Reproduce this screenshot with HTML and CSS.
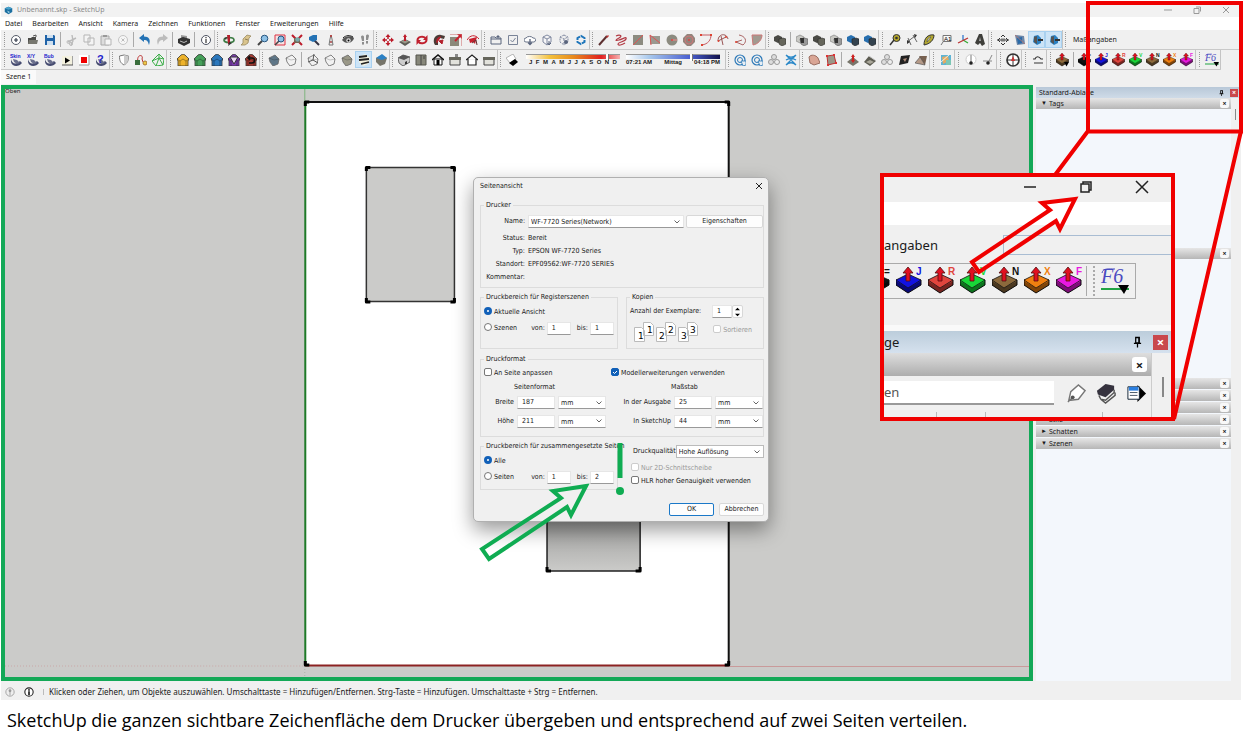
FILE: index.html
```html
<!DOCTYPE html>
<html lang="de">
<head>
    <meta charset="UTF-8">
    <meta name="viewport" content="width=device-width, initial-scale=1.0">
    <title>Unbenannt.skp - SketchUp</title>
    <link rel="stylesheet" href="styles.css">
</head>
<body>
    <!-- Icons -->
    <svg class="sprite" aria-hidden="true">
        <linearGradient id="gShade" x1="0" y1="0" x2="0" y2="1"><stop offset="0" stop-color="#8b8b8a"/><stop offset="1" stop-color="#cbcbc9"/></linearGradient>
        <symbol id="logo" viewBox="0 0 12 12"><path d="M6 1l5 2v5l-5 3-5-3V3z" fill="#1b6fa0"/><path d="M6 1l5 2-5 2-5-2z" fill="#4aa3cc"/><path d="M4 6l4 2-2 1.500z" fill="#9bd0e6"/></symbol>
        <symbol id="new" viewBox="0 0 12 12"><circle cx="6" cy="6" r="4.500" fill="#fff" stroke="#555b68"/><path d="M4 6h4M6 4v4" stroke="#333a4a" stroke-width="1.200"/></symbol>
        <symbol id="open" viewBox="0 0 12 12"><path d="M1 4h3l1-1h4v7H1z" fill="#4b4b48"/><path d="M2 6h9l-1 4H1z" fill="#77776f"/><path d="M6 2l3-1v2" fill="none" stroke="#555"/></symbol>
        <symbol id="save" viewBox="0 0 12 12"><path d="M1 1h9l1 1v9H1z" fill="#1f63a8"/><path d="M3 1h6v3H3zM3 7h6v4H3z" fill="#cfe0f0"/></symbol>
        <symbol id="cut" viewBox="0 0 12 12"><path d="M2 8l8-4M6 1l1 6-2 4" fill="none" stroke="#bbb" stroke-width="1.400"/><circle cx="2.500" cy="8" r="1.500" fill="none" stroke="#bbb"/><circle cx="5" cy="10" r="1.500" fill="none" stroke="#bbb"/></symbol>
        <symbol id="copy" viewBox="0 0 12 12"><path d="M1 1h6v7H1zM5 4h6v7H5z" fill="#f4f4f4" stroke="#b5b5b5"/></symbol>
        <symbol id="paste" viewBox="0 0 12 12"><path d="M1 2h8v9H1z" fill="#ddd" stroke="#aaa"/><path d="M3 1h4v2H3z" fill="#999"/><path d="M5 5h6v6H5z" fill="#f6f6f6" stroke="#b5b5b5"/></symbol>
        <symbol id="del" viewBox="0 0 12 12"><circle cx="6" cy="6" r="4.500" fill="#f6f6f6" stroke="#c4c4c4"/><path d="M4.500 4.500l3 3m0-3l-3 3" stroke="#bbb"/></symbol>
        <symbol id="undo" viewBox="0 0 12 12"><path d="M0 4l5-4v2.500c5 0 7 3 5 8.500-1-4-2-5-5-5V8z" fill="#2573b5"/></symbol>
        <symbol id="redo" viewBox="0 0 12 12"><path d="M12 4L7 0v2.500C2 2.500 0 5.500 2 11c1-4 2-5 5-5V8z" fill="#bcbcbc"/></symbol>
        <symbol id="print" viewBox="0 0 12 12"><path d="M3 1l6 1v3H3z" fill="#999"/><path d="M0 5l5-2 7 2v4l-6 3-6-3z" fill="#333"/><path d="M2 7l4 1.500L9 7" stroke="#bbb" fill="none"/></symbol>
        <symbol id="info" viewBox="0 0 12 12"><circle cx="6" cy="6" r="4.500" fill="#fff" stroke="#4d5260"/><path d="M6 3v1.300M6 5v4" stroke="#333" stroke-width="1.200"/></symbol>
        <symbol id="orbit" viewBox="0 0 12 12"><ellipse cx="6" cy="6" rx="5" ry="2.500" fill="none" stroke="#3d7d45" stroke-width="1.700"/><path d="M4 1h3v9H5z" fill="#b3202c"/><path d="M5 12l4-3-3-1zM1 4l3-1-1 3z" fill="#333"/></symbol>
        <symbol id="pan" viewBox="0 0 12 12"><path d="M1 11l2-2 0-4 4-4 4 1-2 2-1 5-3 2z" fill="#d9c48d" stroke="#9a8a62" stroke-width=".8"/><path d="M5 5l3 1" stroke="#8d7c55"/></symbol>
        <symbol id="zoom" viewBox="0 0 12 12"><path d="M5 7l-4 4" stroke="#444" stroke-width="2"/><circle cx="7.500" cy="4.500" r="3.300" fill="#8ec1e6" stroke="#27557e"/></symbol>
        <symbol id="zoomwin" viewBox="0 0 12 12"><path d="M1 1h10v10H1z" fill="#f5e3e3" stroke="#d34"/><path d="M5 7l-4 4" stroke="#444" stroke-width="1.600"/><circle cx="7" cy="5" r="3" fill="#8ec1e6" stroke="#27557e"/></symbol>
        <symbol id="extents" viewBox="0 0 12 12"><path d="M1 1l10 10M11 1L1 11" stroke="#bd1c2b" stroke-width="2"/><path d="M3 4h6v5H3z" fill="#765"/><circle cx="6.500" cy="5.500" r="2.300" fill="#7aa"/></symbol>
        <symbol id="zoomprev" viewBox="0 0 12 12"><path d="M6 6l5 5" stroke="#334" stroke-width="2"/><path d="M1 3l4-2h4v5L5 8 1 6z" fill="#2573b5"/></symbol>
        <symbol id="camera" viewBox="0 0 12 12"><path d="M6 1l1 4 1 6H4l1-6z" fill="#eee" stroke="#777"/><circle cx="6" cy="2" r="1" fill="#b33"/><circle cx="6" cy="8" r="1" fill="#a44"/></symbol>
        <symbol id="eye" viewBox="0 0 12 12"><path d="M0 6c2-4 9-5 12-2-1 5-8 7-12 2z" fill="#555"/><circle cx="6.500" cy="6.500" r="2.200" fill="#ddd"/><path d="M1 4c3-3 7-3 10-1" stroke="#222" fill="none"/><circle cx="6.500" cy="6.500" r="1"/></symbol>
        <symbol id="steps" viewBox="0 0 12 12"><path d="M2 3c0-2 3-2 3 0v4H3zM7 2c0-2 3-2 3 0l-1 4H7zM3 8h2v2c0 1-2 1-2 0zM7 7h2v2c0 1-2 1-2 0z" fill="#8e8e8e"/></symbol>
        <symbol id="move" viewBox="0 0 12 12"><path d="M6 0l2.500 3h-5zM6 12l2.500-3h-5zM0 6l3-2.500v5zM12 6L9 3.500v5z" fill="#bd1c2b"/><path d="M6 2v8M2 6h8" stroke="#bd1c2b" stroke-width="1.500" stroke-dasharray="3 2"/></symbol>
        <symbol id="pushpull" viewBox="0 0 12 12"><path d="M0 8l6-3 6 3-6 4z" fill="#5d5c55"/><path d="M2 7.500l4-2 4 2-4 2z" fill="#9a9788"/><path d="M6 0l2 3H7v4H5V3H4z" fill="#bd1c2b"/></symbol>
        <symbol id="rotate" viewBox="0 0 12 12"><path d="M1.500 6a4.500 3.500 0 0 1 8-2M10.500 6a4.500 3.500 0 0 1-8 2" stroke="#c0202e" stroke-width="2" fill="none"/><path d="M11.500 1v5H7zM.5 11V6H5z" fill="#c0202e"/></symbol>
        <symbol id="follow" viewBox="0 0 12 12"><path d="M1 9C0 4 3 0 8 1l4 1-1 3-4-1-2 3v4H2z" fill="#4a3b36"/><path d="M4 9C3 5 5 3 8 3M6 7l4-1-1 4z" stroke="#b3202c" fill="#b3202c"/></symbol>
        <symbol id="scale" viewBox="0 0 12 12"><path d="M0 3h9v9H0z" fill="#8b897a"/><path d="M7 0h5v5z" fill="#c8202e"/><path d="M5 7l5-5" stroke="#c8202e" stroke-width="2"/><path d="M0 0h12v12" fill="none" stroke="#c66"/></symbol>
        <symbol id="offset" viewBox="0 0 12 12"><path d="M0 6c3-5 8-6 12-1" fill="none" stroke="#c8202e"/><path d="M2 5l8-2-2 7-2-2-3 1z" fill="#c8202e"/><path d="M5 9l4-3 1 5" stroke="#633" fill="none"/></symbol>
        <symbol id="addfolder" viewBox="0 0 12 12"><path d="M1 3h4l1 1h5v6H1zM1 5h10M8 1v3M6.500 2.500h3" fill="none" stroke="#59647c"/></symbol>
        <symbol id="check" viewBox="0 0 12 12"><path d="M1.500 1.500h9v9h-9zM3.500 6l2 2 3-4" fill="none" stroke="#7a8498"/></symbol>
        <symbol id="cloud" viewBox="0 0 12 12"><path d="M2 8a2 2 0 0 1 0-4 4 3 0 0 1 7 0 2 2 0 0 1 1 4z" fill="#fff" stroke="#6a7488"/><path d="M6 5v5M4 8.500l2 2 2-2" stroke="#59647c" fill="none" stroke-width="1.300"/></symbol>
        <symbol id="cube" viewBox="0 0 12 12"><path d="M6 1l4 2v5l-4 3-4-3V3zM2 3l4 2 4-2M6 5v6" fill="#f6f6f8" stroke="#8089a0"/><path d="M8 7v3M6.500 9L8 11l2-2" stroke="#59647c" fill="none"/></symbol>
        <symbol id="gearcube" viewBox="0 0 12 12"><path d="M6 1l4 2v5l-4 3-4-3V3zM2 3l4 2 4-2M6 5v6" fill="none" stroke="#8089a0" stroke-dasharray="2 1"/><circle cx="8" cy="8" r="2" fill="#59647c"/></symbol>
        <symbol id="exthub" viewBox="0 0 12 12"><path d="M6 2l3.500 2v4L6 10 2.500 8V4z" fill="none" stroke="#1d75ba" stroke-width="2" stroke-dasharray="5 1"/></symbol>
        <symbol id="pencil" viewBox="0 0 12 12"><path d="M1 11L9 2" stroke="#5d3030" stroke-width="2"/><path d="M8 3l2-2 1 1-2 2z" fill="#b33"/></symbol>
        <symbol id="freehand" viewBox="0 0 12 12"><path d="M1 2c4-2 7 0 3 2S0 7 4 6s8-4 7-1-8 3-8 5 4 1 7-1" fill="none" stroke="#b23a44" stroke-width="1.200"/></symbol>
        <symbol id="rect" viewBox="0 0 12 12"><path d="M1 1h10v10H1z" fill="#8c8b80"/><path d="M1 11L11 1" stroke="#d55"/></symbol>
        <symbol id="rrect" viewBox="0 0 12 12"><path d="M1 2h10v8H1z" fill="#9a9990"/><path d="M1 1l1 10M1 1l10 8" stroke="#d55" fill="none"/></symbol>
        <symbol id="circle" viewBox="0 0 12 12"><circle cx="6" cy="6" r="5.500" fill="#8c8b80"/><path d="M6 6h5" stroke="#e88"/><circle cx="6" cy="6" r="1" fill="#d44"/></symbol>
        <symbol id="poly" viewBox="0 0 12 12"><path d="M4 0h5l3 4v4l-4 4H4L0 8V4z" fill="#94847c"/><circle cx="6" cy="6" r="4" fill="none" stroke="#c77"/><circle cx="6" cy="6" r="1" fill="#d44"/></symbol>
        <symbol id="arc1" viewBox="0 0 12 12"><path d="M1 1h10M1 1v1M11 1c0 5-3 9-9 10" fill="none" stroke="#c65a62"/><path d="M0 0h2v2H0zM10 0h2v2h-2zM1 10h2v2H1z" fill="#d43"/></symbol>
        <symbol id="arc2" viewBox="0 0 12 12"><path d="M1 7c0-8 9-8 10-2M1 7l8-4M4 2l2 9" fill="none" stroke="#955"/><circle cx="1.500" cy="7" r="1" fill="#d43"/><circle cx="9" cy="3" r="1" fill="#d43"/></symbol>
        <symbol id="arc3" viewBox="0 0 12 12"><path d="M5 1c6 1 9 6 4 10l-7-3 6-2" fill="none" stroke="#a66"/><circle cx="2" cy="8" r="1" fill="#d43"/></symbol>
        <symbol id="pie" viewBox="0 0 12 12"><path d="M1 1h10c0 5-4 9-9 10z" fill="#a19a90" stroke="#c77"/></symbol>
        <symbol id="solid" viewBox="0 0 12 12"><path d="M0 3l4-2 4 2v5l-4 1-4-2z" fill="#4a4a45"/><path d="M5 5l4-1 3 1v5l-4 2-3-2z" fill="#66665c" stroke="#2c2c2a" stroke-width=".6"/></symbol>
        <symbol id="solidw" viewBox="0 0 12 12"><path d="M0 3l4-2 4 2v5l-4 1-4-2z" fill="#c9c9c5" stroke="#777" stroke-width=".6"/><path d="M4 5l4-1 4 1v5l-4 2-3-2z" fill="#999" stroke="#555" stroke-width=".6"/><path d="M4 4h4v5H5z" fill="#333"/></symbol>
        <symbol id="solidb" viewBox="0 0 12 12"><path d="M0 3l4-2 4 2v5l-4 1-4-2z" fill="#276faf"/><path d="M5 5l4-1 3 1v5l-4 2-3-2z" fill="#34434f" stroke="#222" stroke-width=".6"/></symbol>
        <symbol id="tape" viewBox="0 0 12 12"><circle cx="7.500" cy="4" r="3.500" fill="#b5a72c" stroke="#333"/><circle cx="7.500" cy="4" r="1.300" fill="#333"/><path d="M5 6l-4 5" stroke="#333" stroke-width="1.500"/></symbol>
        <symbol id="dim" viewBox="0 0 12 12"><path d="M1 8l8-6M2 4l3 7M7 1l4 7" stroke="#666" fill="none"/><path d="M1 6l3 2-3 2zM8 0l3 1-2 3z" fill="#333"/></symbol>
        <symbol id="protr" viewBox="0 0 12 12"><path d="M1 11C1 4 5 0 11 1c0 5-4 9-10 10z" fill="#b3a831" stroke="#333"/><path d="M4 8c0-3 2-5 4-5z" fill="#eee" stroke="#444" stroke-width=".6"/></symbol>
        <symbol id="text" viewBox="0 0 12 12"><path d="M3 1.500h8v6H3zM1 11l2-3" fill="#fafafa" stroke="#777"/></symbol>
        <symbol id="axes" viewBox="0 0 12 12"><path d="M6 6V1" stroke="#37c" stroke-width="1.300"/><path d="M6 6l5 3" stroke="#3a3" stroke-width="1.300"/><path d="M11 4L1 9" stroke="#b33" stroke-width="1.300"/></symbol>
        <symbol id="text3d" viewBox="0 0 12 12"><path d="M1 9l4-9h3l3 10-3 2-2-3-2 2z" fill="#3e3e3a"/><path d="M6 3l1 4H5z" fill="#aaa"/></symbol>
        <symbol id="section" viewBox="0 0 12 12"><path d="M0 6h12M3 4L1 6l2 2M9 4l2 2-2 2M4 3l2-2 2 2M4 9l2 2 2-2" fill="none" stroke="#333"/><path d="M4 4.500h4v3H4z" fill="#777"/></symbol>
        <symbol id="sectplane" viewBox="0 0 12 12"><path d="M1 1l9 1 1 8-8 1z" fill="#6b86a8"/><path d="M3 4l5-1v6l-4 1z" fill="#2a6aa8"/><path d="M1 1l10 9" stroke="#a77"/></symbol>
        <symbol id="sectcut" viewBox="0 0 12 12"><path d="M3 2l4-1 3 3v5l-4 2-4-3z" fill="#2a7fc0"/><path d="M3 3l3-1v8l-3-2z" fill="#555"/><path d="M7 5h5v2H7z" fill="#333"/></symbol>
        <symbol id="ink" viewBox="0 0 12 12"><path d="M1 5c1 5 5 6 9 2l2 2c-3 4-10 4-11-1z" fill="#454b70"/><path d="M3 5l4 1 3 3-3 1-3-2z" fill="#6a6f8c"/></symbol>
        <symbol id="play" viewBox="0 0 12 12"><path d="M1 2h10v9H1z" fill="#f3f1df"/><path d="M1 11h11V2" stroke="#555" fill="none"/><path d="M4 3.500l5 3-5 3z"/></symbol>
        <symbol id="stop" viewBox="0 0 12 12"><path d="M1 1h10v10H1z" fill="#fff"/><path d="M1 11h10V1" stroke="#999" fill="none"/><path d="M3 3h6v6H3z" fill="#f00000"/></symbol>
        <symbol id="shield" viewBox="0 0 12 12"><path d="M1.500 2L6 1l4.500 1c0 5-1 7-4.500 9-3.500-2-4.500-4-4.500-9z" fill="#fff" stroke="#777"/><path d="M6 1v10c3-2 4.500-4 4.500-9z" fill="#ccc"/></symbol>
        <symbol id="route" viewBox="0 0 12 12"><path d="M3 8C1 0 9 0 7 5l1 3" fill="none" stroke="#b33"/><path d="M0 6h5v5H0z" fill="#3a6e3d"/><circle cx="10" cy="9" r="2" fill="#eec945" stroke="#a73"/></symbol>
        <symbol id="mesh" viewBox="0 0 12 12"><path d="M7 0l5 5-1 6-7 1-4-5zM0 7l7-3 4 7M7 0v4l-3 8M7 4l5 1" fill="none" stroke="#3cae49"/></symbol>
        <symbol id="shirt" viewBox="0 0 12 12"><path d="M4 1l2-1 2 1 4 4-1 2v5H1V7L0 5z" fill="currentColor" stroke="#333" stroke-width=".8"/><path d="M3 7v5M9 7v5M0 5l3 2 3-2 3 2 3-2" stroke="#0006" fill="none" stroke-width=".8"/></symbol>
        <symbol id="block" viewBox="0 0 12 12"><path d="M1 4l6-3 4 4-1 5-5 2-3-4z" fill="currentColor" stroke="#666" stroke-width=".8"/><path d="M1 4l5 2 5-1" stroke="#0003" fill="none"/></symbol>
        <symbol id="stripes" viewBox="0 0 12 12"><path d="M1 3l6-3 5 4-2 6-5 2-4-4z" fill="#f5f3e0"/><path d="M1 3l8-1M1 6l10-1M3 10l8-2" stroke="#222" stroke-width="1.800"/></symbol>
        <symbol id="bluetop" viewBox="0 0 12 12"><path d="M1 4l6-3 5 3-2 6-5 2-4-4z" fill="#77756a"/><path d="M1 4l6-4 5 4-5 2z" fill="#2a80c5"/></symbol>
        <symbol id="iso" viewBox="0 0 12 12"><path d="M0 4l5-3 7 2v5l-7 4-4-3z" fill="#ccc" stroke="#444" stroke-width=".8"/><path d="M0 4l6 2 6-3-7-2z" fill="#555"/><path d="M7 8l2-1v3H7z" fill="#333"/></symbol>
        <symbol id="top" viewBox="0 0 12 12"><path d="M1 1h10v10H1z" fill="#87877a" stroke="#55554c"/><path d="M6 1v10M9 2v3" stroke="#444"/></symbol>
        <symbol id="front" viewBox="0 0 12 12"><path d="M0 6l6-5 6 5" fill="none" stroke="#111" stroke-width="1.500"/><path d="M2 5h8v6H2z" fill="#fff" stroke="#111"/><path d="M4.500 6h3v5h-3z"/></symbol>
        <symbol id="side" viewBox="0 0 12 12"><path d="M1 5h10v6H1z" fill="#e2e2dc" stroke="#444"/><path d="M0 3h12v3H0z" fill="#66665c"/></symbol>
        <symbol id="back" viewBox="0 0 12 12"><path d="M0 6l6-5 6 5M2 5v6h8V5" fill="#fff" stroke="#222" stroke-width="1.200"/></symbol>
        <symbol id="shadow" viewBox="0 0 12 12"><path d="M0 4l7-4 3 5-6 4z" fill="#fff" stroke="#888" stroke-width=".6"/><path d="M3 9l6-4 3 3-5 4z"/></symbol>
        <symbol id="swirl" viewBox="0 0 12 12"><circle cx="6" cy="6" r="5" fill="none" stroke="#2b78b8" stroke-width="1.200"/><circle cx="6" cy="6" r="2.500" fill="none" stroke="#2b78b8"/><path d="M7 7h5v4l-3 1z" fill="#e8eef4" stroke="#2b78b8" stroke-width=".8"/></symbol>
        <symbol id="blobs" viewBox="0 0 12 12"><circle cx="6" cy="3" r="2.500" fill="#ddd" stroke="#999"/><circle cx="3" cy="8" r="2.500" fill="#ddd" stroke="#999"/><circle cx="9" cy="8" r="2.500" fill="#eee" stroke="#999"/></symbol>
        <symbol id="net" viewBox="0 0 12 12"><path d="M1 1c3 3 7 3 10 0M1 6c3-2 7-2 10 0M1 11c3-3 7-3 10 0M1 1l10 10M11 1L1 11" fill="none" stroke="#2b88c8" stroke-width="1.300"/></symbol>
        <symbol id="terrain" viewBox="0 0 12 12"><path d="M0 8l5-6 7 5-6 5z" fill="#5d5c52"/><path d="M2 8l4-2 4 2-4 2z" fill="#aaa79a"/><path d="M5 2l6 4" stroke="#ccc"/></symbol>
        <symbol id="soft" viewBox="0 0 12 12"><path d="M1 3c2-3 7-2 9 1l2 5-6 2-4-2z" fill="#d9a595" stroke="#9a6c60"/></symbol>
        <symbol id="frame" viewBox="0 0 12 12"><path d="M2 2l7-1 2 8-8 2z" fill="#9b9788" stroke="#b33"/><path d="M1 1h2v2H1zM8 0h2v2H8zM10 8h2v2h-2zM2 10h2v2H2z" fill="#d33"/></symbol>
        <symbol id="redarrow" viewBox="0 0 12 12"><path d="M0 8l6-5 6 5-6 4z" fill="#77756a"/><path d="M6 0l2 3H7v3h1l-2 3-2-3h1V3H4z" fill="#c22"/></symbol>
        <symbol id="dark" viewBox="0 0 12 12"><path d="M3 2l9-1-2 8-9 2z" fill="#222"/><path d="M5 5l4-1-2 4z" fill="#a87"/></symbol>
        <symbol id="flip" viewBox="0 0 12 12"><path d="M4 2h8l-2 9z" fill="#77604f"/><path d="M0 9l5-6 5 8z" fill="#b59a88" stroke="#444" stroke-width=".6"/></symbol>
        <symbol id="geo" viewBox="0 0 12 12"><path d="M1 1h10v10H1z" fill="#5fb4d4"/><path d="M2 3l6-1 1 5-6 3z" fill="#e2aa62"/><path d="M6 6h5v5H6z" fill="#7cc7b4"/><path d="M1 8l8-7" stroke="#fff" stroke-width=".8"/></symbol>
        <symbol id="point" viewBox="0 0 12 12"><circle cx="6" cy="5.500" r="5" fill="#fff" stroke="#ccc"/><path d="M6 1v8" stroke="#777"/><circle cx="6" cy="9" r="1.800" fill="#222"/></symbol>
        <symbol id="point2" viewBox="0 0 12 12"><path d="M10 1L6 9M1 7h9" stroke="#888" fill="none"/><circle cx="6" cy="9" r="1.800" fill="#222"/></symbol>
        <symbol id="compass" viewBox="0 0 14 14"><circle cx="7" cy="7" r="6" fill="#fff" stroke="#333" stroke-width="1.700"/><path d="M7 1v12M1 7h12" stroke="#333"/><path d="M7 3l2 5H5z" fill="#c33"/></symbol>
        <symbol id="wave" viewBox="0 0 12 12"><path d="M2 9h9M1 5h2c1-3 4-3 6 0h2" fill="none" stroke="#333" stroke-width="1.200"/></symbol>
        <symbol id="slab" viewBox="0 0 28 28">
            <path d="M0 13v5l12 8 13-8v-5z" fill="currentColor" stroke="#111"/>
            <path d="M0 18l12 8 13-8v-4l-13 7-12-7z" fill="#0007"/>
            <path d="M0 13l12-6 13 6-13 8z" fill="currentColor" stroke="#111" stroke-width=".8"/>
            <path d="M12 0l5 6h-3v8h-4V6H7z" fill="#e01020" stroke="#501010" stroke-width=".8"/>
        </symbol>
        <symbol id="pin" viewBox="0 0 10 12"><path d="M3 1h4v6H3zM6.500 1v6M1 7.500h8M5 8v4" fill="none" stroke="#000" stroke-width="1.400"/></symbol>
    </svg>

    <main class="slide">
        <div class="app">
            <header class="titlebar">
                <svg class="logo"><use href="#logo"/></svg>
                <span class="title">Unbenannt.skp - SketchUp</span>
                <span class="winbuttons">
                    <button title="Minimieren"><svg viewBox="0 0 10 10"><path d="M1 5h8"/></svg></button>
                    <button title="Verkleinern"><svg viewBox="0 0 10 10"><path d="M2 3.500h5v5H2zM4 2h4.500v4.500"/></svg></button>
                    <button title="Schließen"><svg viewBox="0 0 10 10"><path d="M2 2l6 6M8 2L2 8"/></svg></button>
                </span>
            </header>
            <nav class="menubar">
                <a href="#">Datei</a><a href="#">Bearbeiten</a><a href="#">Ansicht</a><a href="#">Kamera</a><a href="#">Zeichnen</a><a href="#">Funktionen</a><a href="#">Fenster</a><a href="#">Erweiterungen</a><a href="#">Hilfe</a>
            </nav>

            <div class="toolrow">
                <div class="toolbar">
                    <button title="Neu"><svg><use href="#new"/></svg></button>
                    <button title="Öffnen"><svg><use href="#open"/></svg></button>
                    <button title="Speichern"><svg><use href="#save"/></svg></button>
                    <i class="sep"></i>
                    <button title="Ausschneiden"><svg><use href="#cut"/></svg></button>
                    <button title="Kopieren"><svg><use href="#copy"/></svg></button>
                    <button title="Einfügen"><svg><use href="#paste"/></svg></button>
                    <button title="Löschen"><svg><use href="#del"/></svg></button>
                    <i class="sep"></i>
                    <button title="Rückgängig"><svg><use href="#undo"/></svg></button>
                    <button title="Wiederholen"><svg><use href="#redo"/></svg></button>
                    <i class="sep"></i>
                    <button title="Drucken"><svg><use href="#print"/></svg></button>
                    <i class="sep"></i>
                    <button title="Modellinformationen"><svg><use href="#info"/></svg></button>
                </div>
                <div class="toolbar">
                    <button title="Rotieren"><svg><use href="#orbit"/></svg></button>
                    <button title="Schwenken"><svg><use href="#pan"/></svg></button>
                    <button title="Zoom"><svg><use href="#zoom"/></svg></button>
                    <button title="Zoomfenster"><svg><use href="#zoomwin"/></svg></button>
                    <button title="Alles zoomen"><svg><use href="#extents"/></svg></button>
                    <button title="Vorherige"><svg><use href="#zoomprev"/></svg></button>
                    <button title="Kamera positionieren"><svg><use href="#camera"/></svg></button>
                    <button title="Umsehen"><svg><use href="#eye"/></svg></button>
                    <button title="Gehen"><svg><use href="#steps"/></svg></button>
                </div>
                <div class="toolbar">
                    <button title="Verschieben"><svg><use href="#move"/></svg></button>
                    <button title="Drücken/Ziehen"><svg><use href="#pushpull"/></svg></button>
                    <button title="Drehen"><svg><use href="#rotate"/></svg></button>
                    <button title="Folge mir"><svg><use href="#follow"/></svg></button>
                    <button title="Skalieren"><svg><use href="#scale"/></svg></button>
                    <button title="Versatz"><svg><use href="#offset"/></svg></button>
                </div>
                <div class="toolbar">
                    <button title="Ordner"><svg><use href="#addfolder"/></svg></button>
                    <button title="Prüfen"><svg><use href="#check"/></svg></button>
                    <button title="Hochladen"><svg><use href="#cloud"/></svg></button>
                    <button title="3D Warehouse"><svg><use href="#cube"/></svg></button>
                    <button title="Komponente freigeben"><svg><use href="#gearcube"/></svg></button>
                    <button title="Extension Warehouse"><svg><use href="#exthub"/></svg></button>
                </div>
                <div class="toolbar">
                    <button title="Linie"><svg><use href="#pencil"/></svg></button>
                    <button title="Freihand"><svg><use href="#freehand"/></svg></button>
                    <button title="Rechteck"><svg><use href="#rect"/></svg></button>
                    <button title="Gedrehtes Rechteck"><svg><use href="#rrect"/></svg></button>
                    <button title="Kreis"><svg><use href="#circle"/></svg></button>
                    <button title="Polygon"><svg><use href="#poly"/></svg></button>
                    <button title="Bogen"><svg><use href="#arc1"/></svg></button>
                    <button title="2-Punkt-Bogen"><svg><use href="#arc2"/></svg></button>
                    <button title="3-Punkt-Bogen"><svg><use href="#arc3"/></svg></button>
                    <button title="Kreissektor"><svg><use href="#pie"/></svg></button>
                </div>
                <div class="toolbar">
                    <button title="Außenschale"><svg><use href="#solid"/></svg></button>
                    <i class="sep"></i>
                    <button title="Schnittmenge"><svg><use href="#solidw"/></svg></button>
                    <button title="Vereinigen"><svg><use href="#solid"/></svg></button>
                    <button title="Subtrahieren"><svg><use href="#solidw"/></svg></button>
                    <button title="Zuschneiden"><svg><use href="#solidb"/></svg></button>
                    <button title="Teilen"><svg><use href="#solidb"/></svg></button>
                </div>
                <div class="toolbar wide">
                    <button title="Maßband"><svg><use href="#tape"/></svg></button>
                    <button title="Abmessungen"><svg><use href="#dim"/></svg></button>
                    <button title="Winkelmesser"><svg><use href="#protr"/></svg></button>
                    <button title="Text"><svg><use href="#text"/><text class="label" x="4" y="7">A1</text></svg></button>
                    <button title="Achsen"><svg><use href="#axes"/></svg></button>
                    <button title="3D-Text"><svg><use href="#text3d"/></svg></button>
                </div>
                <div class="toolbar">
                    <button title="Schnittebene"><svg><use href="#section"/></svg></button>
                    <button title="Schnittebenen anzeigen"><svg><use href="#sectplane"/></svg></button>
                    <button class="on" title="Schnitte anzeigen"><svg><use href="#sectcut"/></svg></button>
                    <button class="on" title="Schnittfüllung"><svg><use href="#sectcut"/></svg></button>
                </div>
                <div class="toolbar last"><span class="measure">Maßangaben</span></div>
            </div>

            <div class="toolrow short">
                <div class="toolbar">
                    <button title="Skin"><svg><use href="#ink"/><text class="tag" x="0" y="4">Skin</text></svg></button>
                    <button title="X/Y"><svg><use href="#ink"/><text class="tag" x="0" y="4">X/Y</text></svg></button>
                    <button title="Bub"><svg><use href="#ink"/><text class="tag" x="0" y="4">Bub</text></svg></button>
                    <button title="Start"><svg><use href="#play"/></svg></button>
                    <button title="Stopp"><svg><use href="#stop"/></svg></button>
                    <button title="Hilfe"><svg><use href="#ink"/><text class="tag big" x="2" y="9">?</text></svg></button>
                </div>
                <div class="toolbar">
                    <button title="Schild"><svg><use href="#shield"/></svg></button>
                    <button title="Pfad"><svg><use href="#route"/></svg></button>
                    <button title="Netz"><svg><use href="#mesh"/></svg></button>
                </div>
                <div class="toolbar wide">
                    <button title="Gelb" class="c-yellow"><svg><use href="#shirt"/></svg></button>
                    <button title="Grün" class="c-leaf"><svg><use href="#shirt"/></svg></button>
                    <button title="Blau" class="c-sky"><svg><use href="#shirt"/></svg></button>
                    <button title="Violett" class="c-violet"><svg><use href="#shirt"/><path d="M2 3h8l-4 7z" fill="#e9d6f5" stroke="#333"/></svg></button>
                    <button title="Zurück" class="c-brick"><svg><use href="#shirt"/><path d="M3 4h4a2 2 0 0 1 0 5H4M5 2L3 4l2 2" fill="none" stroke="#111" stroke-width="1.500"/></svg></button>
                </div>
                <div class="toolbar">
                    <button title="Röntgen" class="c-slate"><svg><use href="#block"/></svg></button>
                    <button title="Hintere Kanten" class="c-pale"><svg><use href="#block"/></svg></button>
                    <i class="sep"></i>
                    <button title="Drahtmodell" class="c-pale"><svg><use href="#block"/><path d="M1 8l5-2 5 3M7 0L6 6" fill="none" stroke="#555"/></svg></button>
                    <button title="Verdeckte Linie" class="c-pale"><svg><use href="#block"/></svg></button>
                    <button title="Schattiert" class="c-clay"><svg><use href="#block"/></svg></button>
                    <button class="on" title="Texturen"><svg><use href="#stripes"/></svg></button>
                    <button title="Monochrom"><svg><use href="#bluetop"/></svg></button>
                </div>
                <div class="toolbar">
                    <button title="Iso"><svg><use href="#iso"/></svg></button>
                    <button title="Oben"><svg><use href="#top"/></svg></button>
                    <button title="Vorne"><svg><use href="#front"/></svg></button>
                    <button title="Rechts"><svg><use href="#side"/><path d="M6 0h3v3H6z" fill="#888"/></svg></button>
                    <button title="Hinten"><svg><use href="#back"/></svg></button>
                    <button title="Links"><svg><use href="#side"/></svg></button>
                </div>
                <div class="toolbar shadows">
                    <button title="Schatten"><svg><use href="#shadow"/></svg></button>
                    <div class="slider month">
                        <input type="range" aria-label="Monat" min="0" max="100" value="88">
                        <div class="ticks"><span>J</span><span>F</span><span>M</span><span>A</span><span>M</span><span>J</span><span>J</span><span>A</span><span>S</span><span>O</span><span>N</span><span>D</span></div>
                    </div>
                    <div class="slider time">
                        <input type="range" aria-label="Uhrzeit" min="0" max="100" value="70">
                        <div class="ticks"><span>07:21 AM</span><span>Mittag</span><span>04:18 PM</span></div>
                    </div>
                </div>
                <div class="toolbar">
                    <button title="Spirale"><svg><use href="#swirl"/></svg></button>
                    <button title="Spirale 2"><svg><use href="#swirl"/></svg></button>
                    <button title="Blasen"><svg><use href="#blobs"/></svg></button>
                    <button title="Gitter"><svg><use href="#net"/></svg></button>
                </div>
                <div class="toolbar">
                    <button title="Aus Konturen"><svg><use href="#soft"/></svg></button>
                    <button title="Von Grund auf"><svg><use href="#frame"/></svg></button>
                    <i class="sep"></i>
                    <button title="Formen"><svg><use href="#redarrow"/></svg></button>
                    <button title="Stempel"><svg><use href="#terrain"/></svg></button>
                    <button title="Drapieren"><svg><use href="#blobs"/></svg></button>
                    <button title="Detail"><svg><use href="#dark"/></svg></button>
                    <button title="Kante drehen"><svg><use href="#flip"/></svg></button>
                </div>
                <div class="toolbar wide"><button title="Standort"><svg><use href="#geo"/></svg></button></div>
                <div class="toolbar wide">
                    <button title="Punkt"><svg><use href="#point"/></svg></button>
                    <button title="Lot"><svg><use href="#point2"/></svg></button>
                </div>
                <div class="toolbar wide push"><button title="Kompass"><svg><use href="#compass"/></svg></button></div>
                <div class="toolbar wide"><button title="Welle"><svg><use href="#wave"/></svg></button></div>
                <div class="toolbar wide push">
                    <button title="Push Pull" class="c-brown"><svg viewBox="0 0 28 28"><use href="#slab"/><path d="M16 18h10l-5 9z"/></svg></button>
                    <i class="sep"></i>
                    <button title="=" class="c-black"><svg viewBox="0 0 28 28"><use href="#slab"/><text x="20" y="8">=</text></svg></button>
                    <button title="J" class="c-blue"><svg viewBox="0 0 28 28"><use href="#slab"/><text x="20" y="8">J</text></svg></button>
                    <button title="R" class="c-red"><svg viewBox="0 0 28 28"><use href="#slab"/><text x="20" y="8">R</text></svg></button>
                    <button title="V" class="c-green"><svg viewBox="0 0 28 28"><use href="#slab"/><text x="20" y="8">V</text></svg></button>
                    <button title="N" class="c-brown"><svg viewBox="0 0 28 28"><use href="#slab"/><text x="20" y="8">N</text></svg></button>
                    <button title="X" class="c-orange"><svg viewBox="0 0 28 28"><use href="#slab"/><text x="20" y="8">X</text></svg></button>
                    <button title="F" class="c-pink"><svg viewBox="0 0 28 28"><use href="#slab"/><text x="20" y="8">F</text></svg></button>
                </div>
                <div class="toolbar wide push"><button title="F6"><svg viewBox="0 0 28 28"><text class="script" x="0" y="16">F6</text><path d="M1 6c1-5 6-4 13-4" fill="none" stroke="#4a4ac0"/><path d="M0 22h28" stroke="#22a344" stroke-width="2"/><path d="M17 18h11l-5 9z"/></svg></button></div>
            </div>

            <div class="scenes"><button>Szene 1</button></div>

            <div class="workspace">
                <section class="viewport">
                    <svg class="drawing" viewBox="6 89 1023 588" preserveAspectRatio="none">
                        <path d="M6 666h300" stroke="#c9a8a8" stroke-dasharray="1 2"/>
                        <path d="M729 666.500h300" stroke="#c99a9a"/>
                        <path d="M305.500 89v14" stroke="#7fb57f"/>
                        <path d="M305.500 666v11" stroke="#a9b5a9" stroke-dasharray="1 2"/>
                        <path d="M306 102h423v563H306z" fill="#fff"/>
                        <path d="M306 102h423v563" fill="none" stroke="#111" stroke-width="2"/>
                        <path d="M306 102v563" stroke="#1e7a28" stroke-width="2"/>
                        <path d="M306 665.500h423" stroke="#8c2222" stroke-width="2"/>
                        <path d="M367 167.500h88v134h-88z" fill="#cbcbc9" stroke="#333" stroke-width="1.500"/>
                        <path d="M547.500 500h93v71h-93z" fill="url(#gShade)" stroke="#222" stroke-width="1.500"/>
                        <path d="M367 171v-3.500h4M451 167.500h4v4M455 298v4h-4M371 302h-4v-4M547.500 567v4h4M636 571h4.500v-4M306 106v-4h4M725 102h4v4M306 661v4h4M725 665h4v-4" fill="none" stroke="#000" stroke-width="3" stroke-linejoin="round"/>
                    </svg>
                    <span class="viewname">Oben</span>
                </section>
                <aside class="tray">
                    <div class="trayhead"><span>Standard-Ablage</span><svg class="pin"><use href="#pin"/></svg><button class="redclose" title="Schließen">×</button></div>
                    <div class="traybody">
                        <div class="panels">
                            <div class="panel"><b>▼</b><span>Tags</span><button title="Schließen">×</button></div>
                            <div class="panelbody"></div>
                            <div class="panel"><span></span><button title="Schließen">×</button></div>
                            <div class="panelbody second"></div>
                            <div class="panel"><span></span><button title="Schließen">×</button></div>
                            <div class="panel"><span></span><button title="Schließen">×</button></div>
                            <div class="panel"><span></span><button title="Schließen">×</button></div>
                            <div class="panel"><b>►</b><span>Stile</span><button title="Schließen">×</button></div>
                            <div class="panel"><b>►</b><span>Schatten</span><button title="Schließen">×</button></div>
                            <div class="panel"><b>▼</b><span>Szenen</span><button title="Schließen">×</button></div>
                        </div>
                        <div class="scroll"><i></i></div>
                    </div>
                </aside>
            </div>

            <footer class="status">
                <svg viewBox="0 0 12 12"><circle cx="6" cy="6" r="5" fill="#eee" stroke="#999"/><circle cx="6" cy="4.500" r="1.700" fill="#999"/><path d="M6 5v5" stroke="#999"/></svg>
                <svg viewBox="0 0 12 12"><circle cx="6" cy="6" r="5" fill="#fff" stroke="#222" stroke-width="1.300"/><circle cx="6" cy="3.500" r="1"/><path d="M6 5v5" stroke="#000" stroke-width="1.800"/></svg>
                <i></i>
                <span>Klicken oder Ziehen, um Objekte auszuwählen. Umschalttaste = Hinzufügen/Entfernen. Strg-Taste = Hinzufügen. Umschalttaste + Strg = Entfernen.</span>
            </footer>
        </div>
        <p class="caption">SketchUp die ganzen sichtbare Zeichenfläche dem Drucker übergeben und entsprechend auf zwei Seiten verteilen.</p>

        <!-- Druckdialog -->
        <form class="dialog">
            <div class="dlgtitle"><span>Seitenansicht</span><button type="button" title="Schließen"><svg viewBox="0 0 10 10"><path d="M2 2l6 6M8 2L2 8"/></svg></button></div>
            <fieldset class="printer">
                <legend>Drucker</legend>
                <label for="prName">Name:</label>
                <div class="line"><select id="prName"><option>WF-7720 Series(Network)</option></select><button type="button">Eigenschaften</button></div>
                <span>Status:</span><span>Bereit</span>
                <span>Typ:</span><span>EPSON WF-7720 Series</span>
                <span>Standort:</span><span>EPF09562:WF-7720 SERIES</span>
                <span>Kommentar:</span><span></span>
            </fieldset>
            <div class="pair">
                <fieldset class="range">
                    <legend>Druckbereich für Registerszenen</legend>
                    <label><input type="radio" name="scene" checked>Aktuelle Ansicht</label>
                    <div class="line">
                        <label class="pick"><input type="radio" name="scene">Szenen</label>
                        <label class="from">von:<input type="text" value="1"></label>
                        <label class="from">bis:<input type="text" value="1"></label>
                    </div>
                </fieldset>
                <fieldset class="copies">
                    <legend>Kopien</legend>
                    <div class="line"><label for="cnt">Anzahl der Exemplare:</label><span class="spin"><input type="text" id="cnt" value="1"><button type="button" title="Anzahl ändern"><svg viewBox="0 0 8 12"><path d="M4 1l3 3H1zM4 11L1 8h6z"/></svg></button></span></div>
                    <div class="line">
                        <svg class="sheets" viewBox="0 0 66 22">
                            <g fill="#fff" stroke="#bbb"><path d="M9.500 1.500h7l3 3v10h-10zM.5 6.500h7l3 3v11H.5zM31.500 1.500h7l3 3v10h-10zM22.500 6.500h7l3 3v11h-10zM53.500 1.500h7l3 3v10h-10zM44.500 6.500h7l3 3v11h-10z"/></g>
                            <text x="13" y="12">1</text><text x="4" y="18">1</text><text x="34" y="12">2</text><text x="25" y="18">2</text><text x="56" y="12">3</text><text x="47" y="18">3</text>
                        </svg>
                        <label class="off"><input type="checkbox" disabled>Sortieren</label>
                    </div>
                </fieldset>
            </div>
            <fieldset class="format">
                <legend>Druckformat</legend>
                <label class="left"><input type="checkbox">An Seite anpassen</label>
                <label class="right"><input type="checkbox" checked>Modellerweiterungen verwenden</label>
                <span class="left head">Seitenformat</span><span class="right head">Maßstab</span>
                <label for="w">Breite</label><input type="text" id="w" value="187"><select aria-label="Einheit Breite"><option>mm</option></select>
                <label for="o">In der Ausgabe</label><input type="text" id="o" value="25"><select aria-label="Einheit Ausgabe"><option>mm</option></select>
                <label for="h">Höhe</label><input type="text" id="h" value="211"><select aria-label="Einheit Höhe"><option>mm</option></select>
                <label for="s">In SketchUp</label><input type="text" id="s" value="44"><select aria-label="Einheit SketchUp"><option>mm</option></select>
            </fieldset>
            <div class="pair">
                <fieldset class="range low">
                    <legend>Druckbereich für zusammengesetzte Seiten</legend>
                    <label><input type="radio" name="page" checked>Alle</label>
                    <div class="line">
                        <label class="pick"><input type="radio" name="page">Seiten</label>
                        <label class="from">von:<input type="text" value="1"></label>
                        <label class="from">bis:<input type="text" value="2"></label>
                    </div>
                </fieldset>
                <div class="quality">
                    <div class="line"><label for="q">Druckqualität</label><select id="q"><option>Hohe Auflösung</option></select></div>
                    <label class="off"><input type="checkbox" disabled>Nur 2D-Schnittscheibe</label>
                    <label><input type="checkbox">HLR hoher Genauigkeit verwenden</label>
                </div>
            </div>
            <div class="actions"><button type="button" class="ok">OK</button><button type="button">Abbrechen</button></div>
        </form>

        <!-- Lupe -->
        <svg class="notes" viewBox="0 0 1244 750" preserveAspectRatio="none">
            <path d="M1088 3h153v128.500h-153zM1088 131l-33 44M1241 131l-67 288" fill="none" stroke="#f00000" stroke-width="4"/>
        </svg>
        <section class="inset">
            <div class="in-title">
                <svg viewBox="0 0 16 16"><path d="M2 8h12"/></svg>
                <svg viewBox="0 0 16 16"><path d="M3 5h8v8H3zM5 4.500V3h8v8h-1.500"/></svg>
                <svg viewBox="0 0 16 16"><path d="M2 2l12 12M14 2L2 14"/></svg>
            </div>
            <div class="in-menu"></div>
            <div class="in-measure"><label for="m">angaben</label><input type="text" id="m"></div>
            <div class="in-tools">
                <button title="=" class="c-black cutoff"><svg viewBox="0 0 28 28"><use href="#slab"/><text x="20" y="8">=</text></svg></button>
                <button title="J" class="c-blue"><svg viewBox="0 0 28 28"><use href="#slab"/><text x="20" y="8">J</text></svg></button>
                <button title="R" class="c-red"><svg viewBox="0 0 28 28"><use href="#slab"/><text x="20" y="8">R</text></svg></button>
                <button title="V" class="c-green"><svg viewBox="0 0 28 28"><use href="#slab"/><text x="20" y="8">V</text></svg></button>
                <button title="N" class="c-brown"><svg viewBox="0 0 28 28"><use href="#slab"/><text x="20" y="8">N</text></svg></button>
                <button title="X" class="c-orange"><svg viewBox="0 0 28 28"><use href="#slab"/><text x="20" y="8">X</text></svg></button>
                <button title="F" class="c-pink"><svg viewBox="0 0 28 28"><use href="#slab"/><text x="20" y="8">F</text></svg></button>
                <i></i>
                <button title="F6" class="fsix"><svg viewBox="0 0 28 28"><text class="script" x="0" y="16">F6</text><path d="M1 6c1-5 6-4 13-4" fill="none" stroke="#4a4ac0"/><path d="M0 22h28" stroke="#22a344" stroke-width="2"/><path d="M17 18h11l-5 9z"/></svg></button>
            </div>
            <div class="in-head"><span>ge</span><svg><use href="#pin"/></svg><button class="redclose" title="Schließen">×</button></div>
            <div class="in-body">
                <div class="in-panel">
                    <div class="in-bar"><button title="Schließen">×</button></div>
                    <div class="in-search">
                        <input type="text" aria-label="Suchen" value="en">
                        <svg viewBox="0 0 22 22"><path d="M3 18L5 9l8-7 7 6-7 9-8 1zM2 20l5-5" fill="#fff" stroke="#777" stroke-width="1.500"/><circle cx="7" cy="15" r="2" fill="#555"/></svg>
                        <svg viewBox="0 0 22 22"><path d="M1 8l9-7 9 2v4l-9 8-8-3z" fill="#35323e"/><path d="M3 13l2 4 5 1 9-8V7M5 17l5 4 10-8v-3" fill="none" stroke="#555" stroke-width="1.500"/></svg>
                        <svg viewBox="0 0 22 22"><path d="M12 2l9 9-9 9z"/><path d="M2 4h12v13H2z" fill="#fff" stroke="#123"/><path d="M3 4h10v4H3z" fill="#2b7fe0"/><path d="M4 10h8M4 13h8" stroke="#456"/></svg>
                    </div>
                    <div class="in-cols"><i></i><i class="grow"></i><i></i></div>
                </div>
                <div class="in-scroll"><i></i></div>
            </div>
        </section>
        <svg class="notes" viewBox="0 0 1244 750" preserveAspectRatio="none">
            <path d="M1075 199l-33 4 8 7-78 52 7 10 77-51 4 8z" fill="none" stroke="#f00000" stroke-width="4"/>
            <path d="M586 486l-33 5 8 7-79 51 7 10 78-52 4 8z" fill="none" stroke="#0fac52" stroke-width="4"/>
            <path d="M620 443v35" stroke="#0fac52" stroke-width="5"/>
            <circle cx="620" cy="491" r="4" fill="#0fac52"/>
        </svg>
    </main>
</body>
</html>
```
FILE: styles.css
```css
        body {
            margin: 0;
            background: #fff;
            color: #1a1a1a;
            font-family: "Noto Sans", sans-serif;
            font-size: 7px;
            line-height: 12px;
        }
        button, input, select {
            font: inherit;
            color: inherit;
            margin: 0;
            padding: 0;
            border: 0;
            border-radius: 0;
            background: none;
            box-sizing: border-box;
        }
        .sprite {
            position: absolute;
            width: 0;
            height: 0;
        }
        .slide {
            position: relative;
            min-height: 750px;
            overflow: hidden;
        }
        .app {
            background: #f0f0f0;
            margin: 3px 3px 0 1px;
        }

        /* Titel und Menü */
        .titlebar {
            display: flex;
            align-items: center;
            gap: 4px;
            height: 14px;
            padding: 0 10px 0 3px;
            background: #f2f2f2;
            color: #8a8a8a;
        }
        .logo {
            width: 9px;
            height: 9px;
        }
        .title {
            flex: 1;
        }
        .winbuttons {
            display: flex;
            gap: 19px;
        }
        .winbuttons svg, .dlgtitle svg {
            display: block;
            width: 10px;
            height: 10px;
            fill: none;
            stroke: #999;
        }
        .menubar {
            display: flex;
            gap: 10px;
            height: 13px;
            padding-left: 4px;
            background: #fff;
            line-height: 14px;
        }
        .menubar a {
            color: #1a1a1a;
            text-decoration: none;
        }

        /* Werkzeugleisten */
        .toolrow {
            display: flex;
            height: 19px;
            padding-left: 1px;
            border-bottom: 1px solid #c9c9c9;
        }
        .toolrow.short {
            width: fit-content;
        }
        .toolbar {
            display: flex;
            align-items: center;
            border-right: 1px solid #c4c4c4;
        }
        .toolbar::before {
            content: "";
            width: 1px;
            height: 15px;
            margin: 0 2px;
            border-left: 1px dotted #999;
            box-sizing: border-box;
        }
        .toolbar.wide::before {
            margin: 0 3px;
        }
        .toolbar.last {
            border: 0;
        }
        .toolbar button {
            display: flex;
            justify-content: center;
            align-items: center;
            width: 17px;
            height: 17px;
        }
        .toolbar button.on {
            background: #cce4f7;
            outline: 1px solid #a9d1f0;
            outline-offset: -1px;
        }
        .toolbar svg {
            width: 12px;
            height: 12px;
            overflow: visible;
        }
        .push svg {
            width: 14px;
            height: 14px;
        }
        .push text, .in-tools text {
            font: bold 10px "Liberation Sans", sans-serif;
            fill: currentColor;
        }
        .c-brown text {
            fill: #111;
        }
        .push .script, .in-tools .script {
            font: italic 20px "Liberation Serif", serif;
            fill: #4a4ac0;
        }
        .sep {
            width: 1px;
            height: 15px;
            margin: 0 2px;
            background: #aaa;
        }
        .label {
            font: 6px "Liberation Sans", sans-serif;
        }
        .tag {
            font: bold 5px "Liberation Sans", sans-serif;
            fill: #2222cc;
        }
        .tag.big {
            font-size: 11px;
        }
        .measure {
            padding-left: 5px;
            font-size: 7px;
        }
        .c-yellow { color: #eeb32b; }
        .c-leaf { color: #46a05a; }
        .c-sky { color: #2c78bd; }
        .c-violet { color: #7a3cad; }
        .c-brick { color: #a33a31; }
        .c-slate { color: #5f7788; }
        .c-pale { color: #f2f2f2; }
        .c-clay { color: #9a9888; }
        .c-black { color: #111; }
        .c-blue { color: #1212e0; }
        .c-red { color: #e0453d; }
        .c-green { color: #18d838; }
        .c-brown { color: #8c6a3c; }
        .c-orange { color: #f08010; }
        .c-pink { color: #e818e0; }
        .shadows {
            width: 222px;
            padding-right: 5px;
        }
        .slider {
            flex: 1;
            margin-left: 6px;
        }
        .slider input {
            display: block;
            appearance: none;
            width: 100%;
            height: 6px;
        }
        .slider input::-webkit-slider-runnable-track {
            height: 5px;
            border-top: 1px solid #999;
            box-sizing: border-box;
        }
        .month input::-webkit-slider-runnable-track {
            background: linear-gradient(90deg, #fff, #f3c13c 25%, #e88b1d 50%, #e02020 80%, #f7b0b0);
        }
        .time input::-webkit-slider-runnable-track {
            background: linear-gradient(90deg, #fff, #a8c8ec 25%, #4a5fd0 68%, #10104a);
        }
        .slider input::-webkit-slider-thumb {
            appearance: none;
            width: 3px;
            height: 7px;
            margin-top: -1px;
            background: #fff;
            border-right: 1px solid #777;
        }
        .ticks {
            display: flex;
            justify-content: space-between;
            font: bold 6px/7px "Liberation Sans", sans-serif;
            padding: 0 3px;
        }
        .time .ticks {
            padding: 0;
        }
        .scenes {
            height: 15px;
        }
        .scenes button {
            height: 14px;
            padding: 0 5px;
            background: #fafafa;
        }

        /* Arbeitsfläche */
        .workspace {
            display: flex;
            height: 596px;
        }
        .viewport {
            position: relative;
            flex: 1;
            border: 4px solid #13a857;
            background: #cbcbc9;
        }
        .drawing {
            display: block;
            width: 100%;
            height: 100%;
        }
        .viewname {
            position: absolute;
            left: 0;
            top: -2px;
            font-size: 6px;
            line-height: 8px;
        }
        .tray {
            display: flex;
            flex-direction: column;
            width: 205px;
            margin-left: 3px;
        }
        .trayhead {
            display: flex;
            align-items: center;
            height: 11px;
            margin-top: 2px;
            padding: 0 3px;
            background: linear-gradient(#b8c8d8, #cfdbe8);
            line-height: 11px;
        }
        .trayhead span {
            flex: 1;
        }
        .pin {
            width: 5px;
            height: 6px;
            margin-right: 6px;
        }
        .redclose {
            width: 8px;
            height: 8px;
            background: #c9484c;
            color: #fff;
            font-weight: bold;
            line-height: 8px;
        }
        .traybody {
            display: flex;
            flex: 1;
        }
        .panels {
            flex: 1;
            background: #f3f7fc;
        }
        .panel {
            display: flex;
            align-items: center;
            height: 11px;
            margin-bottom: 1px;
            padding: 0 2px 0 5px;
            background: linear-gradient(#e6e6e6, #b6b6b6);
            line-height: 11px;
        }
        .panel b {
            width: 8px;
            font-size: 6px;
        }
        .panel span {
            flex: 1;
        }
        .panel button {
            width: 9px;
            height: 9px;
            background: #f8f8f8;
            border-radius: 2px;
            font-weight: bold;
            line-height: 8px;
        }
        .panelbody {
            height: 138px;
        }
        .panelbody.second {
            height: 118px;
        }
        .scroll {
            width: 10px;
            background: #f0f0f0;
        }
        .scroll i {
            display: block;
            width: 1px;
            height: 11px;
            margin: 11px 4px;
            background: #888;
        }
        .status {
            display: flex;
            align-items: center;
            gap: 9px;
            height: 19px;
            padding: 2px 4px 0;
            box-sizing: border-box;
            font-size: 8px;
        }
        .status svg {
            width: 10px;
            height: 10px;
        }
        .status i {
            width: 1px;
            height: 6px;
            margin-right: -4px;
            background: #bbb;
        }
        .caption {
            margin: 6px 7px 0;
            color: #000;
            font: 18px/28px "Open Sans", sans-serif;
        }

        /* Druckdialog */
        .dialog {
            position: absolute;
            left: 473px;
            top: 177px;
            width: 296px;
            padding: 0 4px 5px 6px;
            box-sizing: border-box;
            background: #f0f0f0;
            border: 1px solid #b0b0b0;
            border-radius: 5px;
            box-shadow: 0 8px 20px rgba(0, 0, 0, 0.4);
            font-family: "DejaVu Sans Condensed", "Noto Sans", sans-serif;
            font-size: 7px;
            line-height: 13px;
        }
        .dlgtitle {
            display: flex;
            justify-content: space-between;
            height: 22px;
            line-height: 17px;
        }
        .dlgtitle button {
            height: 16px;
        }
        .dlgtitle svg {
            stroke: #222;
        }
        .dialog fieldset {
            margin: 0;
            padding: 2px 3px;
            border: 1px solid #dcdcdc;
            box-sizing: border-box;
            min-width: 0;
        }
        .dialog legend {
            padding: 0 2px;
            line-height: 10px;
            white-space: nowrap;
        }
        .dialog input[type=text], .dialog select {
            height: 13px;
            padding: 0 4px;
            background: #fff;
            border: 1px solid #e6e6e6;
            border-bottom-color: #999;
        }
        .dialog select {
            appearance: none;
            padding: 0 2px;
            background: #fff url("data:image/svg+xml,%3Csvg xmlns='http://www.w3.org/2000/svg' width='6' height='4'%3E%3Cpath d='M.5.5L3 3 5.500.5' fill='none' stroke='%23666'/%3E%3C/svg%3E") no-repeat right 3px center;
        }
        .dialog .line button, .actions button {
            height: 13px;
            background: #fdfdfd;
            border: 1px solid #d8d8d8;
            border-radius: 2px;
            line-height: 11px;
        }
        .dialog label {
            white-space: nowrap;
        }
        .dialog input[type=radio], .dialog input[type=checkbox] {
            appearance: none;
            width: 8px;
            height: 8px;
            margin-right: 2px;
            background: #fff;
            border: 1px solid #777;
            border-radius: 2px;
            vertical-align: -1px;
        }
        .dialog input[type=radio] {
            border-radius: 50%;
        }
        .dialog input[type=radio]:checked {
            border: 3px solid #1160b8;
        }
        .dialog input[type=checkbox]:checked {
            border-color: #1160b8;
            background: #1160b8 url("data:image/svg+xml,%3Csvg xmlns='http://www.w3.org/2000/svg' width='6' height='6'%3E%3Cpath d='M1 3l1.500 1.500L5 2' fill='none' stroke='%23fff'/%3E%3C/svg%3E") center no-repeat;
        }
        .dialog .off {
            color: #999;
        }
        .dialog .off input[type=checkbox] {
            border-color: #ccc;
        }
        .line {
            display: flex;
            align-items: center;
        }
        .dialog .printer {
            display: grid;
            grid-template-columns: 41px 1fr;
            grid-template-rows: 21px repeat(4, 13px);
            align-content: start;
            align-items: center;
            column-gap: 3px;
            height: 88px;
            padding: 1px 0 0 3px;
        }
        .printer .line {
            gap: 2px;
        }
        .printer .line select {
            flex: 2;
        }
        .printer .line button {
            flex: 1;
        }
        .printer label, .printer > span:nth-of-type(odd) {
            text-align: right;
        }
        .pair {
            display: grid;
            grid-template-columns: 138px 1fr;
            gap: 8px;
            margin: 4px 0 5px;
        }
        .dialog .range {
            height: 57px;
            padding-top: 4px;
        }
        .range .line {
            margin-top: 3px;
        }
        .dialog .range.low {
            height: 49px;
        }
        .pick {
            width: 48px;
        }
        .from {
            display: flex;
            align-items: center;
            gap: 2px;
            margin-right: 6px;
        }
        .from input[type=text] {
            width: 24px;
        }
        .from:last-child {
            margin: 0;
        }
        .dialog .copies {
            padding-top: 3px;
        }
        .copies .line {
            justify-content: space-between;
        }
        .copies .off {
            margin-right: 8px;
        }
        .spin {
            display: flex;
            margin-right: 17px;
        }
        .spin input[type=text] {
            width: 20px;
        }
        .dialog .spin button {
            width: 11px;
        }
        .spin svg {
            display: block;
            width: 7px;
            height: 10px;
            margin: auto;
        }
        .sheets {
            width: 66px;
            height: 22px;
            margin: 3px 0 0 4px;
        }
        .sheets text {
            font: 9px "DejaVu Sans", sans-serif;
        }
        .dialog .format {
            display: grid;
            grid-template-columns: 30px 38px 48px 62px 38px 1fr;
            grid-template-rows: 14px 15px 15px 22px;
            align-content: start;
            align-items: center;
            column-gap: 3px;
            height: 83px;
            padding-right: 0;
        }
        .format label {
            text-align: right;
        }
        .format .left, .format .right {
            grid-column: span 3;
            text-align: left;
        }
        .format .right {
            padding-left: 2px;
        }
        .format .head {
            padding-left: 30px;
        }
        .format .right.head {
            padding-left: 62px;
        }
        .quality {
            display: flex;
            flex-direction: column;
            padding: 4px 0 0 5px;
        }
        .quality .line {
            margin-bottom: 4px;
            padding-left: 2px;
        }
        .quality .line select {
            flex: 1;
            border-color: #bbb;
        }
        .actions {
            display: flex;
            justify-content: flex-end;
            gap: 5px;
            margin-top: 13px;
        }
        .actions button {
            width: 45px;
        }
        .actions .ok {
            border-color: #1a78c8;
        }

        /* Lupe und Pfeile */
        .notes {
            position: absolute;
            left: 0;
            top: 0;
            width: 100%;
            height: 750px;
            pointer-events: none;
        }
        .inset {
            position: absolute;
            left: 880px;
            top: 173px;
            width: 295px;
            height: 248px;
            box-sizing: border-box;
            overflow: hidden;
            border: 4px solid #f00000;
            background: #f0f0f0;
            font-size: 13px;
        }
        .in-title {
            display: flex;
            justify-content: flex-end;
            gap: 40px;
            height: 25px;
            padding: 2px 21px 0 0;
            box-sizing: border-box;
        }
        .in-title svg {
            width: 16px;
            height: 16px;
            fill: none;
            stroke: #222;
            stroke-width: 1.500;
        }
        .in-menu {
            height: 23px;
            background: #fff;
        }
        .in-measure {
            display: flex;
            align-items: center;
            height: 38px;
            padding-top: 2px;
            box-sizing: border-box;
        }
        .in-measure label {
            flex: none;
            width: 119px;
        }
        .in-measure input {
            flex: 1;
            min-width: 0;
            height: 20px;
            border: 1px solid #a9bdd3;
            border-right: 0;
        }
        .in-tools {
            display: flex;
            align-items: center;
            width: 252px;
            height: 36px;
            box-sizing: border-box;
            border: 1px solid #aaa;
            border-left: 0;
        }
        .in-tools button {
            width: 32px;
            height: 32px;
            flex: none;
        }
        .in-tools .cutoff {
            margin-left: -22px;
        }
        .in-tools svg {
            width: 28px;
            height: 28px;
            overflow: visible;
        }
        .in-tools i {
            width: 6px;
            height: 30px;
            border-left: 1px solid #aaa;
            border-right: 2px dotted #aaa;
        }
        .in-tools .fsix {
            margin-left: 4px;
        }
        .in-head {
            display: flex;
            align-items: center;
            height: 22px;
            margin-top: 26px;
            padding-right: 3px;
            border-top: 6px solid #f9f9f9;
            background: linear-gradient(#bccddb, #d5e1ee);
        }
        .in-head span {
            flex: 1;
        }
        .in-head svg {
            width: 9px;
            height: 12px;
            margin-right: 11px;
        }
        .in-head .redclose {
            width: 15px;
            height: 15px;
            line-height: 13px;
        }
        .in-body {
            display: flex;
        }
        .in-panel {
            flex: 1;
            min-width: 0;
        }
        .in-bar {
            display: flex;
            justify-content: flex-end;
            padding: 4px 4px 0;
            height: 23px;
            box-sizing: border-box;
            background: linear-gradient(#dedede, #adadad);
        }
        .in-bar button {
            width: 15px;
            height: 15px;
            border-radius: 3px;
            background: #fff;
            font-weight: bold;
        }
        .in-search {
            display: flex;
            align-items: center;
            gap: 9px;
            padding: 5px 4px 0 0;
        }
        .in-search input {
            flex: 1;
            min-width: 0;
            height: 24px;
            margin-right: 3px;
            background: #fff;
            border-bottom: 2px solid #999;
            color: #555;
        }
        .in-search svg {
            width: 21px;
            height: 21px;
        }
        .in-cols {
            display: flex;
            height: 12px;
            margin-top: 7px;
            padding-left: 52px;
        }
        .in-cols i {
            width: 49px;
            box-sizing: border-box;
            border-left: 1px solid #bbb;
        }
        .in-cols .grow {
            flex: 1;
        }
        .in-scroll {
            flex: none;
            width: 19px;
            border-left: 1px solid #ccc;
        }
        .in-scroll i {
            display: block;
            width: 2px;
            height: 20px;
            margin: 24px 10px 0;
            background: #888;
        }
```
